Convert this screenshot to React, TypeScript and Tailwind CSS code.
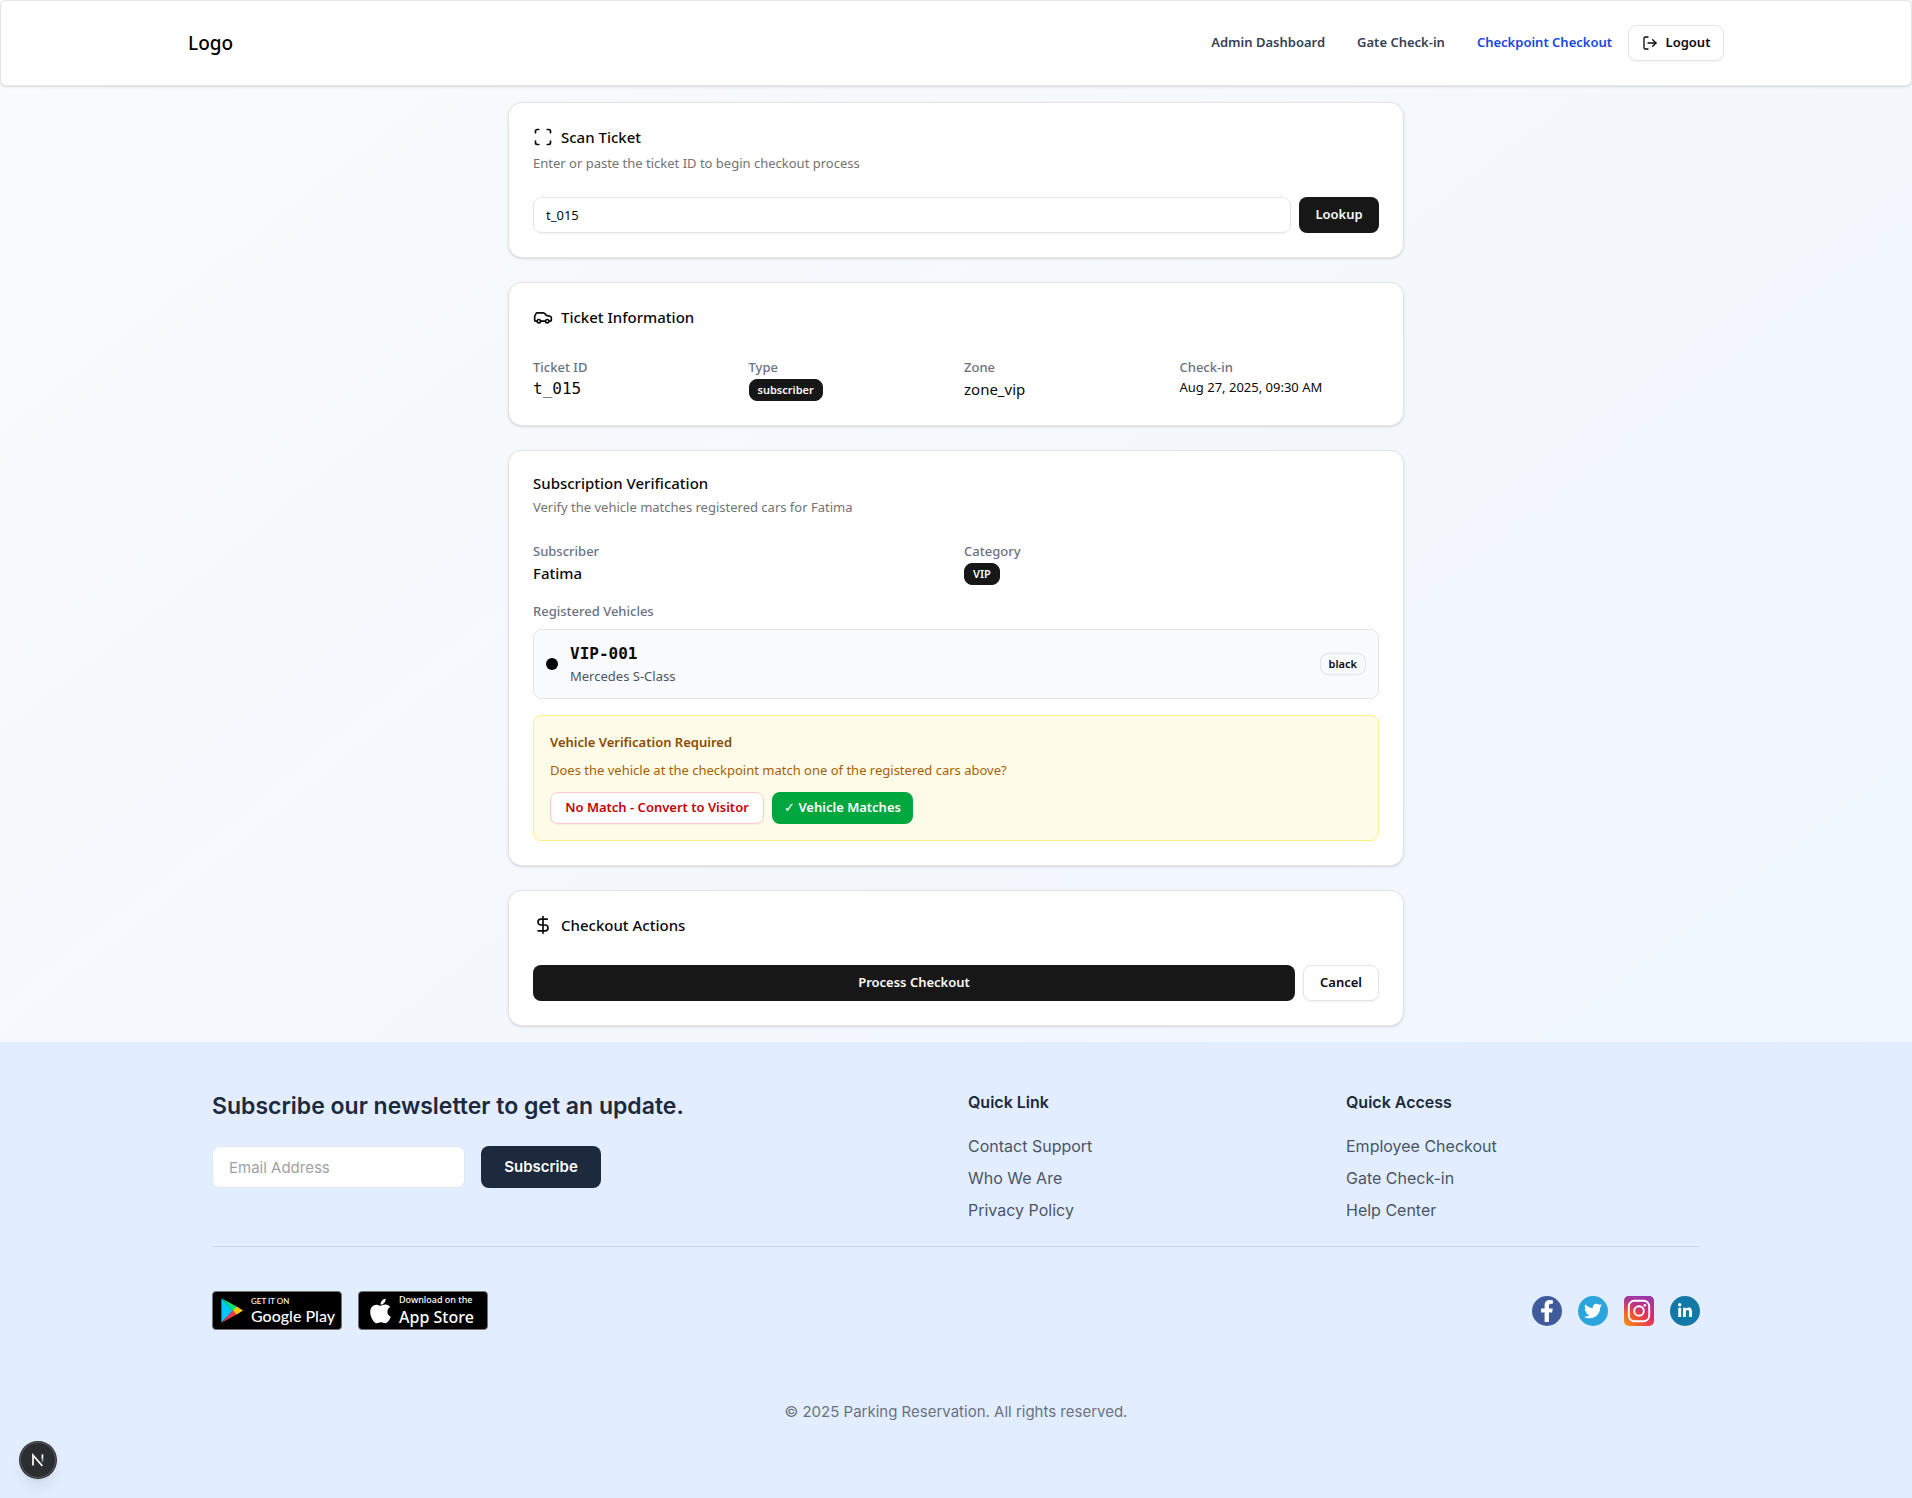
import type { ReactNode } from "react";
import { Car, DollarSign, LogOut, Scan } from "lucide-react";
import { FaApple, FaFacebookF, FaLinkedinIn, FaTwitter } from "react-icons/fa";

const navLinks = [
  { label: "Admin Dashboard", active: false },
  { label: "Gate Check-in", active: false },
  { label: "Checkpoint Checkout", active: true },
];

const footerColumns = [
  { title: "Quick Link", links: ["Contact Support", "Who We Are", "Privacy Policy"] },
  { title: "Quick Access", links: ["Employee Checkout", "Gate Check-in", "Help Center"] },
];

const outlineButton =
  "flex h-9 items-center justify-center gap-2 rounded-lg border border-neutral-200 bg-white text-[13px] font-semibold text-neutral-950 shadow-xs";
const darkButton =
  "flex h-9 items-center justify-center rounded-lg bg-neutral-900 text-[13px] font-semibold text-neutral-50";

function Card({ title, icon, description, children }: { title: string; icon?: ReactNode; description?: string; children: ReactNode }) {
  return (
    <section className="flex flex-col gap-6 rounded-[14px] border border-neutral-200 bg-white p-6 shadow-sm">
      <header className="flex flex-col gap-[6px]">
        <h2 className={`flex items-center gap-2 text-[15px] font-medium ${icon ? "h-5" : "h-4"}`}>
          {icon}
          {title}
        </h2>
        {description ? <p className="text-[13px] leading-5 text-neutral-500">{description}</p> : <span />}
      </header>
      {children}
    </section>
  );
}

function Field({ label, children }: { label: string; children: ReactNode }) {
  return (
    <div>
      <dt className="text-[13px] leading-5 font-medium text-gray-500">{label}</dt>
      <dd className="flex">{children}</dd>
    </div>
  );
}

function Badge({ children, outline = false }: { children: string; outline?: boolean }) {
  return (
    <span
      className={`inline-flex h-[22px] items-center rounded-lg border px-2 text-[11px] font-semibold ${
        outline ? "border-neutral-200 text-neutral-950" : "border-neutral-900 bg-neutral-900 text-neutral-50"
      }`}
    >
      {children}
    </span>
  );
}

function Navbar() {
  return (
    <header className="rounded-md border border-neutral-200 bg-white py-6 shadow-sm">
      <div className="mx-auto flex max-w-[1536px] items-center justify-between">
        <a href="#" className="text-[19px] leading-9 font-medium text-black">Logo</a>
        <nav className="flex items-center">
          {navLinks.map((link) => (
            <a
              key={link.label}
              href="#"
              className={`px-4 text-[13px] font-semibold ${link.active ? "text-blue-700" : "text-gray-700"}`}
            >
              {link.label}
            </a>
          ))}
          <button type="button" className={`${outlineButton} w-24`}>
            <LogOut className="size-4" />
            Logout
          </button>
        </nav>
      </div>
    </header>
  );
}

function GooglePlayBadge() {
  return (
    <a href="#" className="flex h-[39px] w-[130px] items-center gap-2 rounded-[4px] border border-neutral-500 bg-black px-2 text-white">
      <svg viewBox="0 0 22 25" className="h-[25px] w-[22px] shrink-0">
        <path d="M0.4 0.4 L12 12.5 L0.4 24.6Z" fill="#00c8ff" />
        <path d="M0.4 0.2 L16 8.8 L12 12.7Z" fill="#00e676" />
        <path d="M0.4 24.8 L16 16.2 L12 12.3Z" fill="#f23a4c" />
        <path d="M15.8 8.6 L22 12.5 L15.8 16.4 L11.9 12.5Z" fill="#ffc900" />
      </svg>
      <span className="flex flex-col font-[Lato,sans-serif] whitespace-nowrap">
        <span className="text-[8px] leading-[10px] font-medium">GET IT ON</span>
        <span className="text-[16px] leading-5 font-medium">Google Play</span>
      </span>
    </a>
  );
}

function AppStoreBadge() {
  return (
    <a href="#" className="flex h-[39px] w-[130px] items-center gap-2 rounded-[4px] border border-neutral-500 bg-black pl-[11px] text-white">
      <FaApple className="h-7 w-[21px] shrink-0" />
      <span className="flex flex-col font-['Noto_Sans',sans-serif] whitespace-nowrap">
        <span className="text-[9px] leading-[13px] font-medium">Download on the</span>
        <span className="text-[16px] leading-[22px] font-medium">App Store</span>
      </span>
    </a>
  );
}

function InstagramIcon() {
  return (
    <svg viewBox="0 0 30 30" className="size-[30px]">
      <defs>
        <linearGradient id="ig-base" x1="0" y1="1" x2="1" y2="0">
          <stop offset="0" stopColor="#fd9a1c" />
          <stop offset="0.3" stopColor="#f1582f" />
          <stop offset="0.6" stopColor="#dc2a6b" />
          <stop offset="1" stopColor="#a838a0" />
        </linearGradient>
        <linearGradient id="ig-top" x1="0" y1="0" x2="0" y2="1">
          <stop offset="0" stopColor="#9a3aa6" />
          <stop offset="0.55" stopColor="#9a3aa6" stopOpacity="0" />
        </linearGradient>
      </defs>
      <rect width="30" height="30" rx="5" fill="url(#ig-base)" />
      <rect width="30" height="30" rx="5" fill="url(#ig-top)" />
      <rect x="4.8" y="4.8" width="20.4" height="20.4" rx="5.5" fill="none" stroke="white" strokeWidth="1.9" />
      <circle cx="15" cy="15" r="4.8" fill="none" stroke="white" strokeWidth="1.9" />
      <circle cx="20.8" cy="9.2" r="1.3" fill="white" />
    </svg>
  );
}

function Footer() {
  return (
    <footer className="flex-1 bg-[#e2eeff] font-[Inter,sans-serif]">
      <div className="mx-auto max-w-[1536px] px-6 pt-12">
        <div className="grid grid-cols-4 gap-6 border-b border-[#c9d6e8] pb-6">
          <div className="col-span-2">
            <h2 className="mb-6 text-[23px] leading-8 font-semibold text-slate-800">Subscribe our newsletter to get an update.</h2>
            <form className="flex gap-4">
              <input
                type="email"
                aria-label="Email Address"
                placeholder="Email Address"
                className="h-[42px] w-[253px] rounded-lg border border-slate-200 bg-white px-4 text-[15px] placeholder:text-neutral-400"
              />
              <button type="button" className="h-[42px] w-[120px] rounded-lg bg-slate-800 text-[15px] font-semibold text-white">
                Subscribe
              </button>
            </form>
          </div>
          {footerColumns.map((column) => (
            <div key={column.title}>
              <h3 className="mb-5 text-[16px] leading-6 font-semibold text-slate-800">{column.title}</h3>
              <ul className="flex flex-col gap-2">
                {column.links.map((link) => (
                  <li key={link}>
                    <a href="#" className="block text-[16px] leading-6 text-gray-600">{link}</a>
                  </li>
                ))}
              </ul>
            </div>
          ))}
        </div>
        <div className="mt-11 flex items-center justify-between">
          <div className="flex gap-4">
            <GooglePlayBadge />
            <AppStoreBadge />
          </div>
          <div className="flex gap-4">
            <a href="#" aria-label="Facebook" className="flex size-[30px] items-end justify-center rounded-full bg-[#3f5b9c] text-white">
              <FaFacebookF className="mb-1 size-[22px]" />
            </a>
            <a href="#" aria-label="Twitter" className="flex size-[30px] items-center justify-center rounded-full bg-[#2ba5dc] text-white">
              <FaTwitter className="size-[18px]" />
            </a>
            <a href="#" aria-label="Instagram">
              <InstagramIcon />
            </a>
            <a href="#" aria-label="LinkedIn" className="flex size-[30px] items-center justify-center rounded-full bg-[#1278a8] text-white">
              <FaLinkedinIn className="size-4" />
            </a>
          </div>
        </div>
        <p className="mt-[70px] text-center text-[15px] leading-6 text-gray-500">© 2025 Parking Reservation. All rights reserved.</p>
      </div>
    </footer>
  );
}

export default function App() {
  return (
    <div className="flex min-h-screen flex-col bg-linear-to-br from-gray-50 to-blue-50 font-['Noto_Sans',sans-serif] text-neutral-950">
      <Navbar />
      <main className="mx-auto flex w-full max-w-[928px] flex-col gap-6 p-4">
        <Card
          title="Scan Ticket"
          icon={<Scan className="size-5" />}
          description="Enter or paste the ticket ID to begin checkout process"
        >
          <form className="flex gap-2">
            <input
              type="text"
              aria-label="Ticket ID"
              defaultValue="t_015"
              className="h-9 flex-1 rounded-lg border border-neutral-200 px-3 text-[13px] shadow-xs"
            />
            <button type="button" className={`${darkButton} w-20`}>Lookup</button>
          </form>
        </Card>

        <Card title="Ticket Information" icon={<Car className="size-5" />}>
          <dl className="grid grid-cols-4 gap-4">
            <Field label="Ticket ID">
              <span className="font-['DejaVu_Sans_Mono',monospace] text-[16px] leading-6">t_015</span>
            </Field>
            <Field label="Type">
              <span className="flex h-6 items-end">
                <Badge>subscriber</Badge>
              </span>
            </Field>
            <Field label="Zone">
              <span className="text-[15px] leading-6">zone_vip</span>
            </Field>
            <Field label="Check-in">
              <span className="text-[13px] leading-5">Aug 27, 2025, 09:30 AM</span>
            </Field>
          </dl>
        </Card>

        <Card title="Subscription Verification" description="Verify the vehicle matches registered cars for Fatima">
          <div className="flex flex-col gap-4">
            <dl className="grid grid-cols-2 gap-4">
              <Field label="Subscriber">
                <span className="text-[15px] leading-6 font-medium">Fatima</span>
              </Field>
              <Field label="Category">
                <span className="flex h-6 items-end">
                  <Badge>VIP</Badge>
                </span>
              </Field>
            </dl>
            <div>
              <h3 className="mb-2 text-[13px] leading-5 font-medium text-gray-500">Registered Vehicles</h3>
              <div className="flex items-center justify-between rounded-lg border border-neutral-200 bg-gray-50 p-3">
                <div className="flex items-center gap-3">
                  <span className="size-3 rounded-full bg-black" />
                  <div>
                    <p className="font-['DejaVu_Sans_Mono',monospace] text-[16px] leading-6 font-bold">VIP-001</p>
                    <p className="text-[13px] leading-5 text-gray-600">Mercedes S-Class</p>
                  </div>
                </div>
                <Badge outline>black</Badge>
              </div>
            </div>
            <div className="rounded-lg border border-yellow-200 bg-yellow-50 p-4">
              <h3 className="mb-2 text-[13px] leading-5 font-semibold text-yellow-800">Vehicle Verification Required</h3>
              <p className="mb-3 text-[13px] leading-5 text-yellow-700">
                Does the vehicle at the checkpoint match one of the registered cars above?
              </p>
              <div className="flex gap-2">
                <button
                  type="button"
                  className="h-8 w-[214px] rounded-lg border border-red-200 bg-white text-[13px] font-semibold text-red-700 shadow-xs"
                >
                  No Match - Convert to Visitor
                </button>
                <button type="button" className="h-8 w-[141px] rounded-lg bg-green-600 text-[13px] font-semibold text-white">
                  <span className="font-normal">✓</span> Vehicle Matches
                </button>
              </div>
            </div>
          </div>
        </Card>

        <Card title="Checkout Actions" icon={<DollarSign className="size-5" />}>
          <div className="flex gap-2">
            <button type="button" className={`${darkButton} flex-1`}>Process Checkout</button>
            <button type="button" className={`${outlineButton} w-[76px]`}>Cancel</button>
          </div>
        </Card>
      </main>
      <Footer />
      <button
        type="button"
        aria-label="Open developer tools"
        className="fixed bottom-5 left-5 flex size-9 items-center justify-center rounded-full border border-white/20 bg-[#2a2e30] shadow-lg ring-1 ring-black/80"
      >
        <svg viewBox="0 0 14 14" className="size-[14px]" fill="none">
          <defs>
            <linearGradient id="n-fade" x1="0" y1="0" x2="0" y2="1">
              <stop offset="0.3" stopColor="white" />
              <stop offset="1" stopColor="white" stopOpacity="0" />
            </linearGradient>
          </defs>
          <path d="M2 12.6V2.2L11.4 13" stroke="white" strokeWidth="1.7" />
          <path d="M10.6 1.4h1.7v9h-1.7z" fill="url(#n-fade)" />
        </svg>
      </button>
    </div>
  );
}
